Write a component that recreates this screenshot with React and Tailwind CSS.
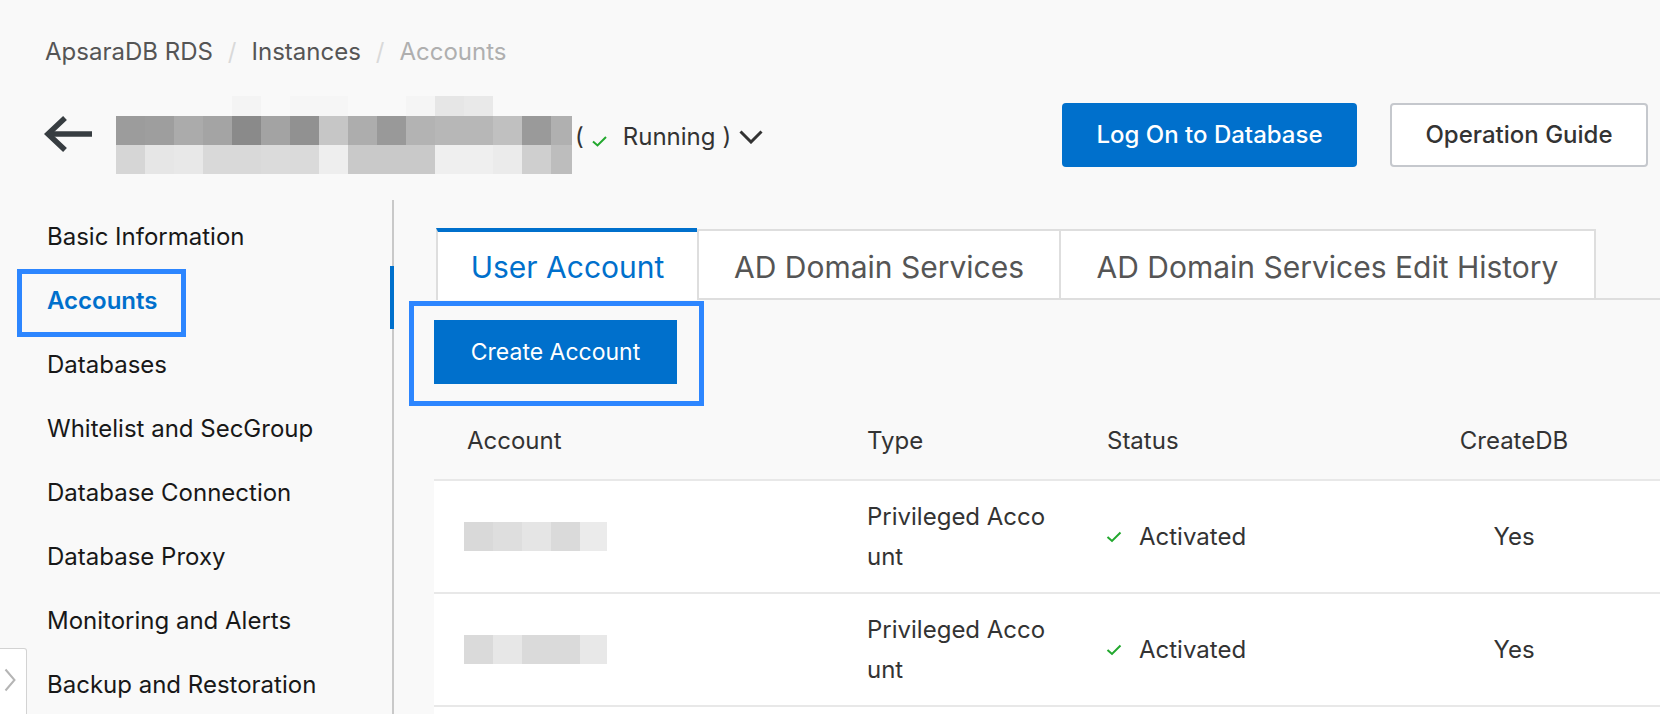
import React from "react";

const NAV = [
  "Basic Information",
  "Accounts",
  "Databases",
  "Whitelist and SecGroup",
  "Database Connection",
  "Database Proxy",
  "Monitoring and Alerts",
  "Backup and Restoration",
];

// blurred instance name, one entry per 29px column (last one is narrower)
const NAME_TOP = ["", "", "", "", "#f4f4f4", "", "#f6f6f6", "#f6f6f6", "", "", "#f5f5f5", "#e6e6e6", "#e9e9e9", "", "", ""];
const NAME_MID = ["#9c9c9c", "#9e9e9e", "#ababab", "#a4a4a4", "#8a8a8a", "#a3a3a3", "#919191", "#c6c6c6", "#adadad", "#999999", "#b3b3b3", "#b7b7b7", "#b7b7b7", "#c0c0c0", "#9a9a9a", "#b0b0b0"];
const NAME_BOT = ["#d6d6d6", "#e6e6e6", "#e8e8e8", "#d9d9d9", "#d9d9d9", "#dbdbdb", "#dadada", "#eeeeee", "#c9c9c9", "#c9c9c9", "#c9c9c9", "#efefef", "#efefef", "#ebebeb", "#cfcfcf", "#bdbdbd"];

const ROWS = [
  { blur: ["#d9d9d9", "#dedede", "#e5e5e5", "#dadada", "#ebebeb"] },
  { blur: ["#dadada", "#e7e7e7", "#dadada", "#dadada", "#e8e8e8"] },
];

function BlurRow({ colors, height }) {
  return (
    <div className="flex">
      {colors.map((c, i) => (
        <div
          key={i}
          className={i === colors.length - 1 ? "w-[21px]" : "w-[29px]"}
          style={{ height, backgroundColor: c || "transparent" }}
        />
      ))}
    </div>
  );
}

function Check({ className }) {
  return (
    <svg viewBox="0 0 16 11" className={className} fill="none">
      <path d="M1.5 5.5 L6 9.5 L14.5 1" stroke="#22a82e" strokeWidth="2" />
    </svg>
  );
}

export default function App() {
  return (
    <div className="relative h-[714px] w-[1660px] overflow-hidden bg-[#f9f9f9] text-[#333] [font-family:Inter,'Noto_Sans',sans-serif]">
      {/* breadcrumb */}
      <nav className="flex pl-[45px] pt-[38px] text-[24px] leading-[28px]">
        <span className="text-[#555]">ApsaraDB RDS</span>
        <span className="px-[15px] text-[#d9d9d9]">/</span>
        <span className="text-[#555]">Instances</span>
        <span className="px-[15px] text-[#d9d9d9]">/</span>
        <span className="text-[#afafaf]">Accounts</span>
      </nav>

      {/* instance header */}
      <div className="mt-[30px] flex items-start">
        <svg viewBox="0 0 48 38" className="ml-[44px] mt-[19px] h-[38px] w-[48px]" fill="none">
          <path d="M21 3 L4 19 L21 35" stroke="#373d41" strokeWidth="5.5" />
          <path d="M5 19 H48" stroke="#373d41" strokeWidth="5.5" />
        </svg>
        <div className="ml-[24px] flex flex-col">
          <BlurRow colors={NAME_TOP} height={20} />
          <BlurRow colors={NAME_MID} height={29} />
          <BlurRow colors={NAME_BOT} height={29} />
        </div>
        <div className="ml-[3px] mt-[26px] flex items-start text-[24px] leading-[29px] text-[#333]">
          <span>(</span>
          <Check className="ml-[7px] mt-[14px] h-[11px] w-[17px]" />
          <span className="ml-[15px]">Running</span>
          <span className="ml-[7px]">)</span>
          <svg viewBox="0 0 24 14" className="ml-[8px] mt-[8px] h-[14px] w-[24px]" fill="none">
            <path d="M1.5 1.5 L12 12 L22.5 1.5" stroke="#333" strokeWidth="3" />
          </svg>
        </div>
        <div className="ml-auto mr-[12px] mt-[7px] flex gap-[33px] text-[24px] font-medium">
          <button className="h-[64px] w-[295px] rounded-[4px] bg-[#0070cc] text-white">
            Log On to Database
          </button>
          <button className="h-[64px] w-[258px] rounded-[4px] border-2 border-[#c5c8cd] bg-white text-[#333]">
            Operation Guide
          </button>
        </div>
      </div>

      {/* body */}
      <div className="mt-[26px] flex h-[514px]">
        <aside className="relative w-[394px] shrink-0 border-r-2 border-[#c9c9c9] pt-[5px]">
          {NAV.map((item) => (
            <div
              key={item}
              className={`flex h-[64px] items-center pl-[47px] text-[24px] ${
                item === "Accounts" ? "font-semibold text-[#0070cc]" : "text-[#181818]"
              }`}
            >
              {item}
            </div>
          ))}
          <div className="absolute right-[-2px] top-[66px] h-[63px] w-[4px] bg-[#0070cc]" />
          <div className="absolute left-[17px] top-[69px] h-[68px] w-[169px] border-[5px] border-[#2d86ff]" />
          <div className="absolute left-0 top-[448px] flex h-[80px] w-[27px] items-start rounded-tr-[3px] border border-l-0 border-[#d3d3d3] bg-white pl-[4px] pt-[19px]">
            <svg viewBox="0 0 12 24" className="h-[24px] w-[12px]" fill="none">
              <path d="M1.5 1.5 L10.5 12 L1.5 22.5" stroke="#b5b5b5" strokeWidth="2" />
            </svg>
          </div>
        </aside>

        <main className="flex min-w-0 flex-1 flex-col pt-[28px]">
          {/* tabs */}
          <div className="flex h-[72px] items-end">
            <div className="ml-[42px] flex h-[72px] w-[261px] justify-center border-l-2 border-t-4 border-l-[#dedede] border-t-[#0070cc] bg-white pt-[17px] text-[30px] leading-[36px] text-[#0070cc]">
              User Account
            </div>
            <div className="flex h-[71px] w-[362px] justify-center border-2 border-r-0 border-[#dedede] bg-white pt-[18px] text-[30px] leading-[36px] text-[#555]">
              AD Domain Services
            </div>
            <div className="flex h-[71px] w-[537px] justify-center border-2 border-[#dedede] bg-white pt-[18px] text-[30px] leading-[36px] text-[#555]">
              AD Domain Services Edit History
            </div>
            <div className="h-[2px] flex-1 bg-[#dedede]" />
          </div>

          {/* create account */}
          <div className="ml-[15px] mt-[1px] h-[105px] w-[295px] border-[5px] border-[#2d86ff] pl-[20px] pt-[14px]">
            <button className="h-[64px] w-[243px] bg-[#0070cc] text-[23px] text-white">
              Create Account
            </button>
          </div>

          {/* table */}
          <div className="ml-[40px] flex flex-1 flex-col text-[24px] text-[#333]">
            <div className="flex h-[75px] border-b-2 border-[#e8e8e8] pt-[20px] leading-[29px]">
              <div className="w-[400px] pl-[33px]">Account</div>
              <div className="w-[240px] pl-[33px]">Type</div>
              <div className="w-[294px] pl-[33px]">Status</div>
              <div className="flex-1 text-center">CreateDB</div>
            </div>
            {ROWS.map((row, idx) => (
              <div key={idx} className="flex h-[113px] shrink-0 items-center border-b-2 border-[#e8e8e8] bg-white">
                <div className="w-[400px] pl-[30px]">
                  <div className="flex">
                    {row.blur.map((c, i) => (
                      <div
                        key={i}
                        className={`h-[29px] ${i === row.blur.length - 1 ? "w-[27px]" : "w-[29px]"}`}
                        style={{ backgroundColor: c }}
                      />
                    ))}
                  </div>
                </div>
                <div className="w-[240px] pl-[33px] leading-[40px]">
                  <div>Privileged Acco</div>
                  <div>unt</div>
                </div>
                <div className="flex w-[294px] items-center pl-[32px]">
                  <Check className="h-[12px] w-[16px]" />
                  <span className="ml-[17px]">Activated</span>
                </div>
                <div className="flex-1 text-center">Yes</div>
              </div>
            ))}
            <div className="flex-1 bg-white" />
          </div>
        </main>
      </div>
    </div>
  );
}
